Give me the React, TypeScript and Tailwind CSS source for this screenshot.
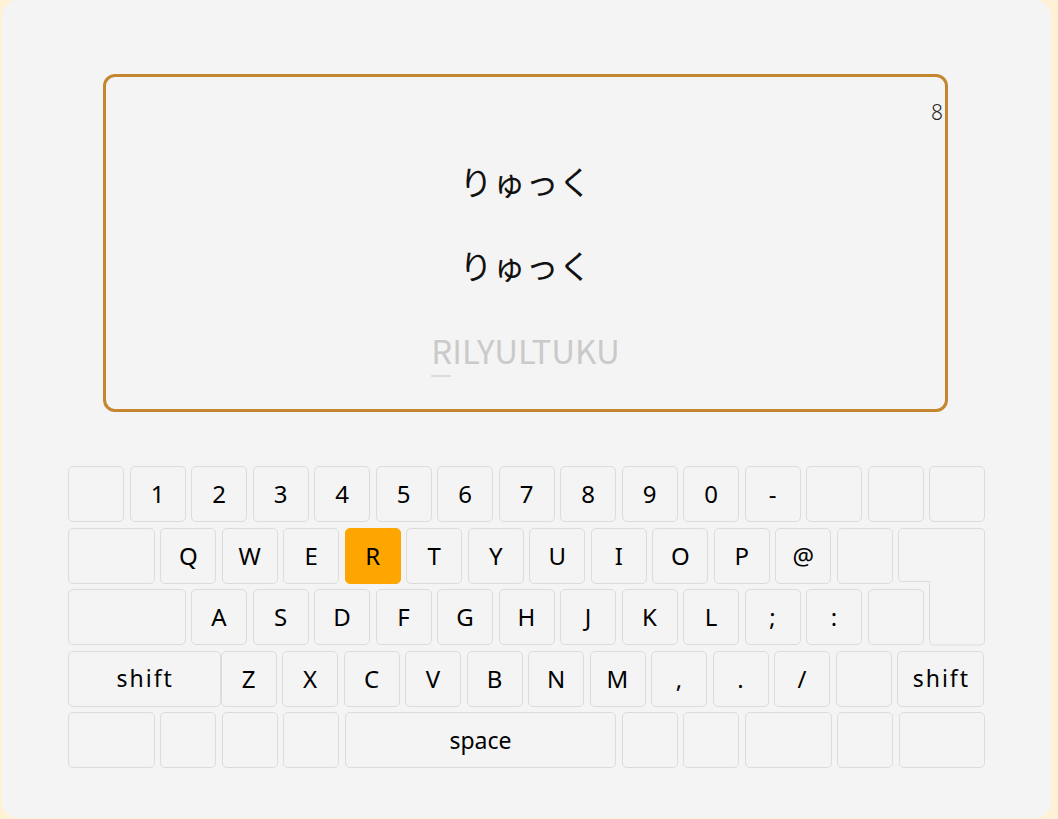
const FONT = "font-['Noto_Sans_CJK_JP','Noto_Sans',sans-serif]";
const KEYFONT = "font-['Noto_Sans','Noto_Sans_CJK_JP',sans-serif]";

type K = { label?: string; w?: string; active?: boolean; flush?: boolean };

const U1 = "w-[56px]";
const U15 = "w-[86.75px]";
const U2 = "w-[117.5px]";

const row1: K[] = [
  {},
  { label: "1" },
  { label: "2" },
  { label: "3" },
  { label: "4" },
  { label: "5" },
  { label: "6" },
  { label: "7" },
  { label: "8" },
  { label: "9" },
  { label: "0" },
  { label: "-" },
  {},
  {},
  {},
];

const row2: K[] = [
  { w: U15 },
  ...["Q", "W", "E"].map((l) => ({ label: l })),
  { label: "R", active: true },
  ...["T", "Y", "U", "I", "O", "P", "@"].map((l) => ({ label: l })),
  {},
];

const row3: K[] = [
  { w: U2 },
  ...["A", "S", "D", "F", "G", "H", "J", "K", "L", ";", ":"].map((l) => ({ label: l })),
  {},
];

const row4: K[] = [
  { label: "shift", w: "w-[152.5px]", flush: true },
  ...["Z", "X", "C", "V", "B", "N", "M", ",", ".", "/"].map((l) => ({ label: l })),
  {},
  { label: "shift", w: U15 },
];

const row5: K[] = [
  { w: U15 },
  {},
  {},
  {},
  { label: "space", w: "w-[271.5px]" },
  {},
  {},
  { w: U15 },
  {},
  { w: U15 },
];

function Key({ k }: { k: K }) {
  const long = (k.label?.length ?? 0) > 1;
  return (
    <div
      className={`${k.w ?? U1} h-[56px] shrink-0 rounded-[5px] flex items-center justify-center text-black ${
        long ? "text-[23px]" : "text-[24px]"
      } ${k.label === "shift" ? "tracking-[2px] pl-[2px]" : ""} ${
        k.active ? "bg-[#ffa500] border border-[#ffa500]" : "border border-[#dcdcdc]"
      } ${k.flush ? "-mr-[5.5px]" : ""}`}
    >
      {k.label}
    </div>
  );
}

function Row({ keys, children }: { keys: K[]; children?: React.ReactNode }) {
  return (
    <div className="flex gap-[5.5px]">
      {keys.map((k, i) => (
        <Key key={i} k={k} />
      ))}
      {children}
    </div>
  );
}

function EnterKey() {
  return (
    <div className="relative w-[86.75px] h-[56px] shrink-0">
      <svg className="absolute left-0 top-0" width="88" height="118" viewBox="0 0 88 118" fill="none">
        <path
          d="M5 0.5 H82 Q86.5 0.5 86.5 5 V112.5 Q86.5 117 82 117 H36 Q31.5 117 31.5 112.5 V53.5 H5 Q0.5 53.5 0.5 49 V5 Q0.5 0.5 5 0.5 Z"
          stroke="#dcdcdc"
          strokeWidth="1"
        />
      </svg>
    </div>
  );
}

export default function App() {
  return (
    <div className={`w-[1058px] h-[819px] bg-[#fff1d6] overflow-hidden ${FONT}`}>
      <div className="ml-[2px] w-[1049px] h-[818px] bg-[#f4f4f4] rounded-[16px] pt-[74px]">
        <div className="relative ml-[101px] w-[845px] h-[338px] border-[3px] border-[#c4862f] rounded-[12px] flex flex-col items-center">
          <div className="absolute right-[2px] top-[25px] font-['Noto_Sans',sans-serif] font-light text-[21px] leading-none text-[#222]">
            8
          </div>
          <div className="mt-[84px] text-[33px] leading-[40px] text-[#111]">りゅっく</div>
          <div className="mt-[44px] text-[33px] leading-[40px] text-[#111]">りゅっく</div>
          <div className="mt-[45px] relative text-[33px] leading-[40px] text-[#cacaca]">
            RILYULTUKU
            <div className="absolute left-0 top-[45px] w-[20px] h-[2px] bg-[#dcdcdc]" />
          </div>
        </div>

        <div className={`ml-[66px] mt-[54px] flex flex-col gap-[5.5px] w-[918px] ${KEYFONT}`}>
          <Row keys={row1} />
          <Row keys={row2}>
            <EnterKey />
          </Row>
          <Row keys={row3} />
          <Row keys={row4} />
          <Row keys={row5} />
        </div>
      </div>
    </div>
  );
}
